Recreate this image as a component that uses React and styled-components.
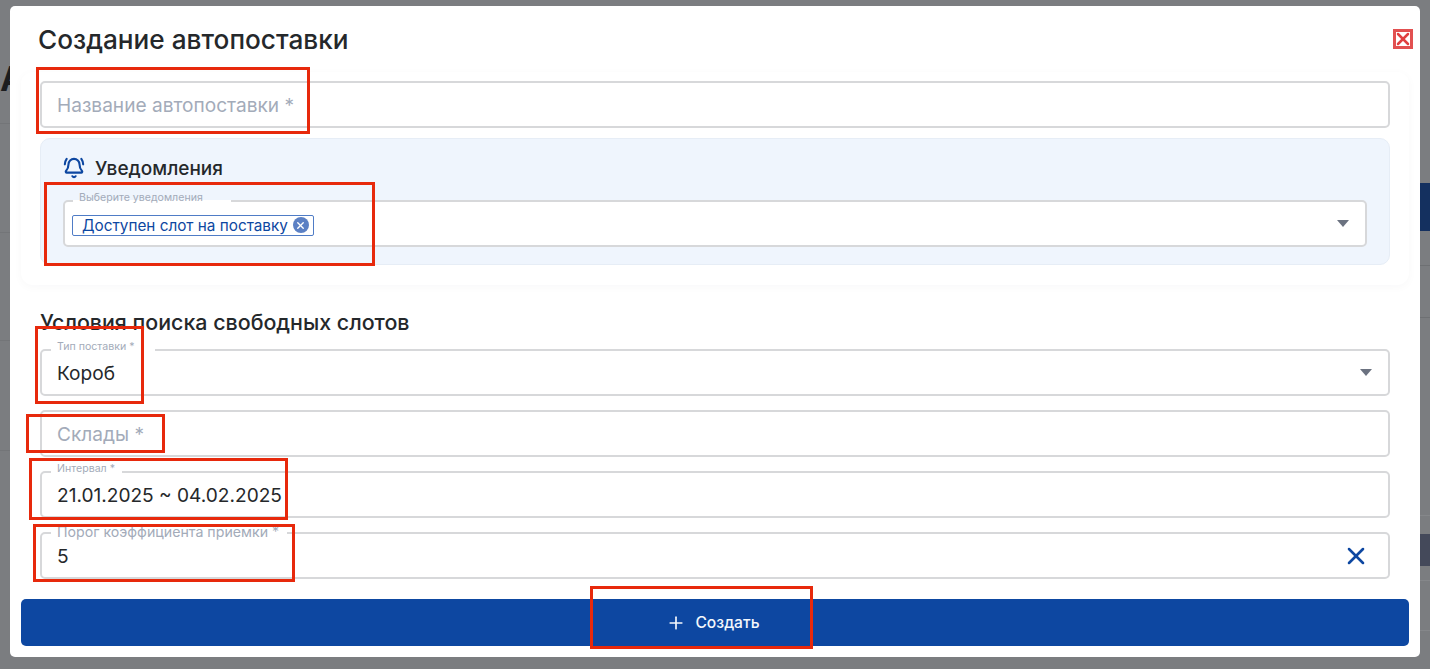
import React from 'react';
import styled, { createGlobalStyle } from 'styled-components';
import { X, Plus, BellRing } from 'lucide-react';

const GlobalStyle = createGlobalStyle`
  html, body {
    margin: 0;
    padding: 0;
    height: 100%;
    background: #7b7d80;
    font-family: Inter, "Liberation Sans", sans-serif;
    overflow: hidden;
  }
`;

const Backdrop = styled.div`
  position: relative;
  width: 1430px;
  height: 669px;
  padding: 6px 10px 0;
  box-sizing: border-box;
  background: #7b7d80;
  overflow: hidden;
`;

const BehindBar = styled.div`
  position: absolute;
  left: ${(p) => (p.$left ? 0 : 1420)}px;
  width: 10px;
  top: ${(p) => p.$top}px;
  height: ${(p) => p.$height}px;
  background: ${(p) => p.$color};
`;

const BehindLetter = styled.span`
  position: absolute;
  left: 0;
  top: 58px;
  font-size: 34px;
  font-weight: 700;
  color: #1c1d1f;
`;

const Modal = styled.div`
  position: relative;
  height: 651px;
  background: #fff;
  border-radius: 5px;
  box-sizing: border-box;
`;

const Header = styled.div`
  height: 66px;
  display: flex;
  align-items: center;
  justify-content: space-between;
  padding: 0 7px 0 28px;
`;

const Title = styled.h1`
  margin: 0;
  font-size: 26.2px;
  font-weight: 500;
  color: #25282b;
`;

const CloseButton = styled.button`
  width: 20px;
  height: 20px;
  padding: 0;
  display: flex;
  align-items: center;
  justify-content: center;
  background: #fff;
  border: 3px solid #e25050;
  color: #e04040;
  box-sizing: border-box;
`;

const CloseIcon = styled(X)`
  flex-shrink: 0;
`;

const TopCard = styled.div`
  margin: 0 11px;
  padding: 9px 19px 20px;
  border-radius: 12px;
  box-shadow: 0 2px 10px rgba(30, 40, 60, 0.03);
  display: flex;
  flex-direction: column;
  gap: 10px;
`;

const Field = styled.div`
  position: relative;
  height: 47px;
  display: flex;
  align-items: center;
  justify-content: space-between;
  padding: 0 14px 0 ${(p) => (p.$chips ? 7 : 15)}px;
  background: #fff;
  border: 2px solid #d7d8da;
  border-radius: 5px;
  box-sizing: border-box;
  font-size: 19.1px;
  color: #25282b;
`;

const Placeholder = styled.span`
  color: #a3abb9;
`;

const Legend = styled.span`
  position: absolute;
  left: ${(p) => p.$left ?? 9}px;
  top: ${(p) => (p.$large ? -12 : -13)}px;
  padding: 0 ${(p) => p.$gap}px 0 6px;
  background: linear-gradient(transparent ${(p) => (p.$large ? 50 : 60)}%, #fff ${(p) => (p.$large ? 50 : 60)}%);
  font-size: ${(p) => (p.$large ? 14.2 : 10.6)}px;
  line-height: ${(p) => (p.$large ? 20 : 18)}px;
  color: #a3abb9;
`;

const NotifyPanel = styled.section`
  height: 127px;
  padding: 15px 22px 0;
  background: #eff5fd;
  border: 1px solid #e6edf6;
  border-radius: 10px;
  box-sizing: border-box;
`;

const NotifyHeading = styled.div`
  display: flex;
  align-items: center;
  gap: 10px;
  height: 28px;
  margin-bottom: 18px;
  font-size: 19px;
  font-weight: 500;
  color: #25282b;
`;

const Chip = styled.span`
  display: inline-flex;
  align-items: center;
  gap: 5px;
  height: 21px;
  padding: 0 4px 0 9px;
  border: 1px solid #4f7cc6;
  border-radius: 2px;
  box-sizing: border-box;
  font-size: 15.3px;
  color: #0d47a1;
`;

const ChipClear = styled.span`
  width: 16px;
  height: 16px;
  display: flex;
  align-items: center;
  justify-content: center;
  border-radius: 50%;
  background: #5b80c4;
  color: #fff;
`;

const Caret = styled.span`
  width: 0;
  height: 0;
  border-left: 6px solid transparent;
  border-right: 6px solid transparent;
  border-top: 7px solid #6b7280;
  margin-right: 2px;
`;

const ClearIcon = styled(X)`
  margin-right: 4px;
  color: #0d47a1;
`;

const Conditions = styled.div`
  padding: 0 30px;
  display: flex;
  flex-direction: column;
`;

const SectionTitle = styled.h2`
  margin: 22px 0 12px;
  height: 30px;
  line-height: 30px;
  font-size: 21.4px;
  font-weight: 500;
  color: #25282b;
`;

const FieldStack = styled.div`
  display: flex;
  flex-direction: column;
  gap: 14px;
`;

const SubmitButton = styled.button`
  display: flex;
  width: calc(100% - 22px);
  height: 47px;
  margin: 20px 11px 0;
  padding: 0 4px 0 0;
  align-items: center;
  justify-content: center;
  gap: 9px;
  background: #0d47a1;
  border: none;
  border-radius: 5px;
  font-family: inherit;
  font-size: 15.6px;
  font-weight: 500;
  color: #f4f7fc;
`;

const Marker = styled.div`
  position: absolute;
  left: ${(p) => p.$x}px;
  top: ${(p) => p.$y}px;
  width: ${(p) => p.$w}px;
  height: ${(p) => p.$h}px;
  border: 3px solid #e7290c;
  box-sizing: border-box;
  pointer-events: none;
`;

const markers = [
  { x: 36, y: 67, w: 274, h: 67 },
  { x: 44, y: 182, w: 331, h: 84 },
  { x: 35, y: 326, w: 109, h: 78 },
  { x: 26, y: 414, w: 139, h: 39 },
  { x: 29, y: 458, w: 259, h: 62 },
  { x: 33, y: 524, w: 262, h: 58 },
  { x: 590, y: 586, w: 223, h: 63 },
];

const behindRows = [
  { top: 183, height: 48, color: '#14305f' },
  { top: 265, height: 1, color: '#6e7073' },
  { top: 317, height: 1, color: '#6e7073' },
  { top: 515, height: 1, color: '#85878a' },
  { top: 534, height: 32, color: '#44495a' },
  { top: 580, height: 1, color: '#85878a' },
  { top: 630, height: 1, color: '#85878a' },
  { top: 123, height: 1, color: '#737578', left: true },
  { top: 232, height: 1, color: '#737578', left: true },
  { top: 340, height: 1, color: '#737578', left: true },
  { top: 450, height: 1, color: '#737578', left: true },
];

export default function App() {
  return (
    <Backdrop>
      <GlobalStyle />
      <BehindLetter>A</BehindLetter>
      {behindRows.map((r) => (
        <BehindBar key={`${r.top}`} $top={r.top} $height={r.height} $color={r.color} $left={r.left} />
      ))}
      <Modal>
        <Header>
          <Title>Создание автопоставки</Title>
          <CloseButton aria-label="Закрыть">
            <CloseIcon size={20} strokeWidth={3} />
          </CloseButton>
        </Header>
        <TopCard>
          <Field>
            <Placeholder>Название автопоставки *</Placeholder>
          </Field>
          <NotifyPanel>
            <NotifyHeading>
              <BellRing size={22} color="#0d47a1" strokeWidth={2.3} />
              Уведомления
            </NotifyHeading>
            <Field $chips>
              <Legend $gap={28} $left={8}>Выберите уведомления</Legend>
              <span>
                <Chip>
                  Доступен слот на поставку
                  <ChipClear>
                    <X size={11} strokeWidth={3} />
                  </ChipClear>
                </Chip>
              </span>
              <Caret />
            </Field>
          </NotifyPanel>
        </TopCard>
        <Conditions>
          <SectionTitle>Условия поиска свободных слотов</SectionTitle>
          <FieldStack>
            <Field>
              <Legend $gap={20}>Тип поставки *</Legend>
              Короб
              <Caret />
            </Field>
            <Field>
              <Placeholder>Склады *</Placeholder>
            </Field>
            <Field>
              <Legend $gap={7}>Интервал *</Legend>
              21.01.2025 ~ 04.02.2025
            </Field>
            <Field>
              <Legend $large $gap={8}>Порог коэффициента приемки *</Legend>
              5
              <ClearIcon size={28} strokeWidth={2.2} />
            </Field>
          </FieldStack>
        </Conditions>
        <SubmitButton>
          <Plus size={20} />
          Создать
        </SubmitButton>
      </Modal>
      {markers.map((m) => (
        <Marker key={`${m.x}-${m.y}`} $x={m.x} $y={m.y} $w={m.w} $h={m.h} />
      ))}
    </Backdrop>
  );
}
